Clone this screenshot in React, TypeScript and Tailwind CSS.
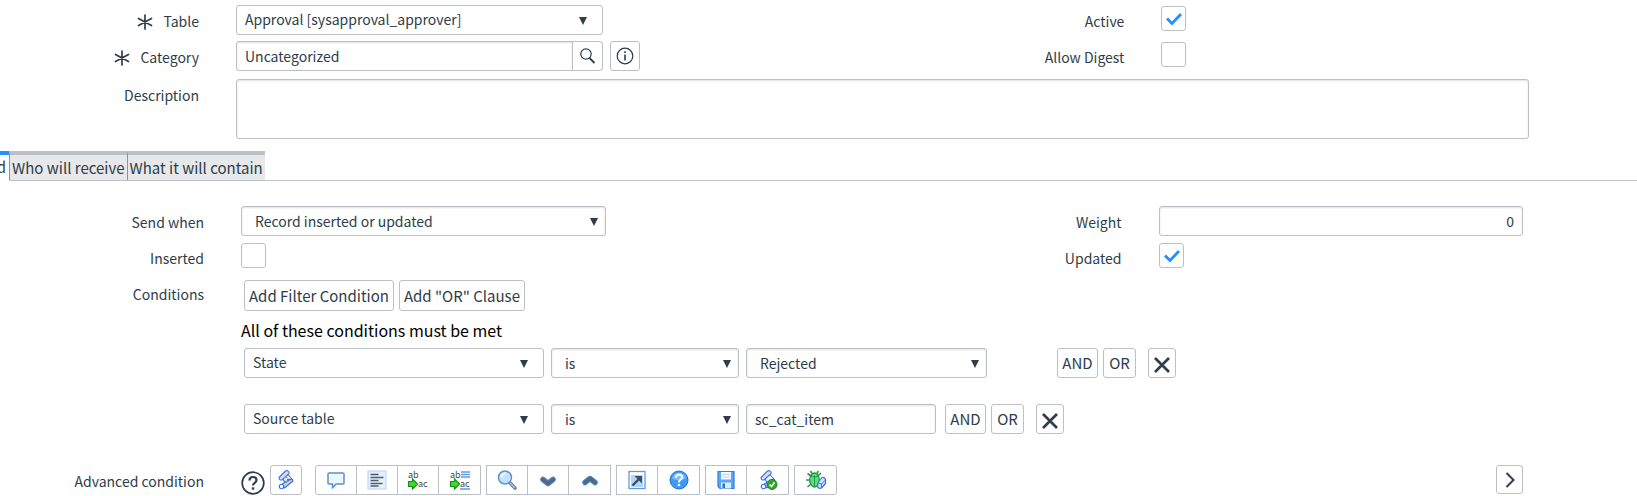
import type { ReactNode } from 'react'

const BOX = 'rounded-[3px] border border-[#bcbfc5] bg-white'
const INSET = 'shadow-[inset_0_1px_2px_rgba(0,0,0,0.12)]'

const FORM_GRID = 'grid grid-cols-[199px_11fr_447px_10fr] gap-x-[37px] pr-[108px]'
const TAB_GRID = 'grid grid-cols-[204px_364fr_479px_364fr] gap-x-[37px] pr-[114px]'

function Asterisk() {
  return (
    <svg width="16" height="16" viewBox="0 0 16 16" className="mt-0.5 mr-2.5" stroke="#2e3d49" strokeWidth="1.7" strokeLinecap="round">
      <path d="M8 1v14M1.500 4.500l13 7M14.500 4.500l-13 7" />
    </svg>
  )
}

function Label({ htmlFor, required, children }: { htmlFor?: string; required?: boolean; children: ReactNode }) {
  return (
    <label htmlFor={htmlFor} className="flex h-[31px] items-center justify-end">
      {required && <Asterisk />}
      {children}
    </label>
  )
}

interface SelectProps {
  id?: string
  label?: string
  value: string
  wide?: boolean
  className?: string
}

function Select({ id, label, value, wide, className = '' }: SelectProps) {
  return (
    <div className={`relative ${className}`}>
      <select
        id={id}
        aria-label={label}
        className={`block h-[30px] w-full appearance-none ${BOX} ${wide ? 'pb-0.5 pl-2' : `pl-[13px] ${INSET}`}`}
      >
        <option>{value}</option>
      </select>
      <svg
        width="8"
        height="8"
        viewBox="0 0 8 8"
        className={`pointer-events-none absolute top-3 ${wide ? 'right-4' : 'right-2'}`}
      >
        <path d="M0 0h8L4 8z" fill="#2e3d49" />
      </svg>
    </div>
  )
}

function Checkbox({ id, checked }: { id: string; checked?: boolean }) {
  return (
    <div className="relative mt-px size-[25px]">
      <input id={id} type="checkbox" defaultChecked={checked} className={`peer block size-[25px] appearance-none ${BOX}`} />
      <svg
        width="25"
        height="25"
        viewBox="0 0 25 25"
        className="pointer-events-none absolute inset-0 hidden peer-checked:block"
        fill="none"
        stroke="#278efc"
        strokeWidth="2.8"
      >
        <path d="M6 12.500l5 5L20 8" />
      </svg>
    </div>
  )
}

function Button({ children, label, className = 'h-[30px]' }: { children: ReactNode; label?: string; className?: string }) {
  return (
    <button type="button" aria-label={label} className={`flex items-center justify-center whitespace-nowrap ${BOX} ${className}`}>
      {children}
    </button>
  )
}

function RowButtons({ className = '' }: { className?: string }) {
  return (
    <div className={`flex ${className}`}>
      <Button className="h-[30px] w-[41px] text-[15px]">AND</Button>
      <Button className="ml-[5px] h-[30px] w-[33px] text-[15px]">OR</Button>
      <Button label="Remove condition" className="ml-3 h-[30px] w-[28px]">
        <svg width="16" height="16" viewBox="0 0 16 16" className="mt-1" stroke="#2e3d49" strokeWidth="2.7">
          <path d="M1 1l14 14M15 1L1 15" />
        </svg>
      </Button>
    </div>
  )
}

function Icon({ children }: { children: ReactNode }) {
  return (
    <svg width="20" height="20" viewBox="0 0 20 20" fill="none" className="overflow-visible">
      {children}
    </svg>
  )
}

function ScriptShape() {
  return (
    <g stroke="#3f6fe8" strokeWidth="1.1" strokeLinejoin="round">
      <path d="M6.500 8.500L11 3.500l5.500 6-5.500 5.500z" fill="#f3f8ff" />
      <path d="M3 7.500L9.500 1q2-1 3.500 1 .5 1.500-1 2.500L6 10q-3 .5-3-2.500z" fill="#cfe0fd" />
      <path d="M5.500 14.500l8.500-5q2.500-.5 3 1.500L8.500 18z" fill="#b9d2fc" />
      <circle cx="5.500" cy="16.500" r="2.200" fill="#fff" />
    </g>
  )
}

function ScriptIcon() {
  return (
    <Icon>
      <ScriptShape />
      <path d="M8.500 7.500h3" stroke="#f08a2c" strokeWidth="1.400" />
      <path d="M11 9.500h3.500" stroke="#e03c31" strokeWidth="1.500" />
      <path d="M7.500 11.500h4" stroke="#3cb54a" strokeWidth="1.500" />
    </Icon>
  )
}

function CommentIcon() {
  return (
    <Icon>
      <path d="M3 3h14q1 0 1 1v9q0 1-1 1h-7l-3.500 4v-4H3q-1 0-1-1V4q0-1 1-1z" fill="#eef6fe" stroke="#5a93cf" strokeWidth="1.500" strokeLinejoin="round" />
    </Icon>
  )
}

function FormatIcon() {
  return (
    <Icon>
      <rect x="1" y="1" width="18" height="18" fill="#e4effd" stroke="#b8d1f6" />
      <path d="M3.500 4.500h8M3.500 7.500h13M3.500 10.500h8M3.500 13.500h12M3.500 16h8" stroke="#555c66" strokeWidth="1.400" />
    </Icon>
  )
}

function ReplaceIcon({ all }: { all?: boolean }) {
  return (
    <Icon>
      {all && <path d="M11 2h9M11 4.500h9M11 7h9M10 19h10" stroke="#5b9be0" strokeWidth="1.500" />}
      <g fill="#4a4a4a" fontSize="9" fontFamily="'Noto Sans CJK SC', sans-serif">
        <text x="0" y="8">ab</text>
        <text x="10" y="17">ac</text>
      </g>
      <path d="M.5 11.500h4V9l5 5-5 5v-2.500h-4z" fill="#3ddc2a" stroke="#15901a" strokeWidth="1.200" />
    </Icon>
  )
}

function SearchIcon() {
  return (
    <Icon>
      <path d="M12.500 12.500l5.500 5.500" stroke="#6b7f99" strokeWidth="3.600" strokeLinecap="round" />
      <path d="M13 13l4.500 4.500" stroke="#a3c4ea" strokeWidth="1.400" strokeLinecap="round" />
      <circle cx="8" cy="7.500" r="6.500" fill="#c6e1fa" stroke="#5b95d6" strokeWidth="1.500" />
      <path d="M4.500 7q.5-3 3.500-3.500" stroke="#fff" strokeWidth="1.600" strokeLinecap="round" />
    </Icon>
  )
}

function ChevronIcon({ up }: { up?: boolean }) {
  const d = up ? 'M5 12.500l5-4 5 4' : 'M5 9.500l5 4 5-4'
  return (
    <Icon>
      <path d={d} stroke="#3f86cc" strokeWidth="5.500" strokeLinecap="round" strokeLinejoin="round" />
      <path d={d} stroke="#5a6675" strokeWidth="3.200" strokeLinecap="round" strokeLinejoin="round" />
    </Icon>
  )
}

function PopoutIcon() {
  return (
    <Icon>
      <rect x="2" y="1.500" width="16" height="17" fill="#fff" stroke="#5a9be0" strokeWidth="1.300" />
      <rect x="4" y="5" width="12" height="12" fill="#b5d3f3" />
      <path d="M5.500 15.500L12 9" stroke="#3a4f69" strokeWidth="2.400" />
      <path d="M7.500 6h7.500v7.500z" fill="#3a4f69" />
    </Icon>
  )
}

function HelpBadgeIcon() {
  return (
    <Icon>
      <circle cx="10" cy="10" r="9" fill="#3c9cf5" stroke="#1c6fd0" />
      <path d="M3 8.500a7.200 7.200 0 0 1 14 0q-7 3-14 0z" fill="#7cc0fb" />
      <path d="M7 7.500q0-3 3-3t3 2.700q0 1.800-1.600 2.600T10 12.300" stroke="#fff" strokeWidth="2" />
      <circle cx="10" cy="15" r="1.300" fill="#fff" />
    </Icon>
  )
}

function SaveIcon() {
  return (
    <Icon>
      <path d="M2 1.500h16v17H4l-2-2z" fill="#5aa7f5" stroke="#2f7fdc" strokeWidth="1.200" />
      <rect x="5" y="2" width="10" height="7.500" fill="#f4f9ff" />
      <path d="M6 4.500h8M6 7h8" stroke="#c3d5ea" />
      <rect x="5" y="12.500" width="10" height="6" fill="#dfeaf7" />
      <rect x="6.500" y="13.500" width="2.500" height="4.500" fill="#2f6fbf" />
    </Icon>
  )
}

function ScriptCheckIcon() {
  return (
    <Icon>
      <ScriptShape />
      <circle cx="14" cy="14.500" r="5" fill="#2fa52b" stroke="#1d8420" />
      <path d="M11.500 14.500l2 2 3-4" stroke="#fff" strokeWidth="1.600" />
    </Icon>
  )
}

function DebugIcon() {
  return (
    <Icon>
      <path d="M5 6L1.500 3.500M4 10H0M5 14l-3.500 3M12 6l3-3M6 3.500L4.500 1M11 3.500L12.500 1" stroke="#2c9c4c" strokeWidth="1.600" />
      <ellipse cx="8.500" cy="10" rx="4.800" ry="7" fill="#5fdc86" stroke="#1f9a45" strokeWidth="1.300" />
      <path d="M8.500 5.500v11M4.500 6q4 2 8 0" stroke="#1f9a45" />
      <path d="M12 12.500l4-5q2.500-.5 3.500 2v4L15.500 18q-3 1-4-1.500z" fill="#cfe0fd" stroke="#3f6fe8" strokeWidth="1.200" strokeLinejoin="round" />
      <path d="M12 13l3.500 1 4-4M15.500 14v3.500" stroke="#3f6fe8" />
    </Icon>
  )
}

interface Tool {
  label: string
  icon: ReactNode
}

const TOOL_GROUPS: Tool[][] = [
  [
    { label: 'Toggle comment', icon: <CommentIcon /> },
    { label: 'Format code', icon: <FormatIcon /> },
    { label: 'Replace', icon: <ReplaceIcon /> },
    { label: 'Replace all', icon: <ReplaceIcon all /> },
  ],
  [
    { label: 'Search', icon: <SearchIcon /> },
    { label: 'Find next', icon: <ChevronIcon /> },
    { label: 'Find previous', icon: <ChevronIcon up /> },
  ],
  [
    { label: 'Full screen', icon: <PopoutIcon /> },
    { label: 'Editor help', icon: <HelpBadgeIcon /> },
  ],
  [
    { label: 'Save', icon: <SaveIcon /> },
    { label: 'Check syntax', icon: <ScriptCheckIcon /> },
  ],
  [{ label: 'Script debugger', icon: <DebugIcon /> }],
]

function Toolbar() {
  return (
    <div className="flex gap-[5px]">
      {TOOL_GROUPS.map((group, g) => (
        <div
          key={g}
          className="flex h-[30px] divide-x divide-[#bcbfc5] border border-[#bcbfc5] first:rounded-l-[3px] last:rounded-r-[3px]"
        >
          {group.map(({ label, icon }) => (
            <button key={label} type="button" aria-label={label} className="flex w-[41px] items-center justify-center">
              {icon}
            </button>
          ))}
        </div>
      ))}
    </div>
  )
}

function Tabs() {
  return (
    <div role="tablist" className="mt-3 flex h-[30px] text-[15px] leading-[24px] whitespace-nowrap">
      <button type="button" role="tab" aria-selected="true" className="flex w-[9px] justify-end overflow-hidden border-t-4 border-[#278efc] pr-[3px]">
        When to send
      </button>
      <div className="flex flex-1 border-b border-[#bcbfc5]">
        {['Who will receive', 'What it will contain'].map((tab) => (
          <button
            key={tab}
            type="button"
            role="tab"
            aria-selected="false"
            className="border-t-4 border-l border-t-[#bcbfc5] border-l-[#8f9399] bg-[#e6e8ea] px-0.5"
          >
            {tab}
          </button>
        ))}
      </div>
    </div>
  )
}

export default function App() {
  return (
    <div className="overflow-hidden bg-white font-['Noto_Sans_CJK_SC','Noto_Sans',sans-serif] text-[14px] leading-5 text-[#2e3d49]">
      <div className={`${FORM_GRID} pt-[5px]`}>
        <Label htmlFor="table" required>Table</Label>
        <Select id="table" value="Approval [sysapproval_approver]" wide className="mr-[37px]" />
        <Label htmlFor="active">Active</Label>
        <Checkbox id="active" checked />
      </div>
      <div className={`${FORM_GRID} mt-[5px]`}>
        <Label htmlFor="category" required>Category</Label>
        <div className="flex">
          <input id="category" defaultValue="Uncategorized" className={`h-[30px] min-w-0 flex-1 rounded-r-none px-2 ${BOX} ${INSET}`} />
          <Button label="Look up category" className="-ml-px h-[30px] w-[31px] rounded-l-none">
            <svg width="16" height="16" viewBox="0 0 16 16" fill="none" stroke="#2e3d49" strokeWidth="1.200">
              <circle cx="6" cy="6" r="5.200" />
              <path d="M9.500 10l5 5" strokeWidth="1.800" />
            </svg>
          </Button>
          <Button label="Preview record" className="ml-[7px] h-[30px] w-[30px]">
            <svg width="18" height="18" viewBox="0 0 18 18" fill="none" stroke="#2e3d49" strokeWidth="1.200">
              <circle cx="9" cy="9" r="7.800" />
              <path d="M9 7.500v6M9 4.300v1.700" strokeWidth="1.600" />
            </svg>
          </Button>
        </div>
        <Label htmlFor="digest">Allow Digest</Label>
        <Checkbox id="digest" />
      </div>
      <div className="mt-[7px] grid grid-cols-[199px_1fr] gap-x-[37px] pr-[108px]">
        <Label htmlFor="description">Description</Label>
        <textarea id="description" className={`block h-[60px] w-full resize-none ${BOX} ${INSET}`} />
      </div>

      <Tabs />

      <div className={`${TAB_GRID} pt-[25px]`}>
        <Label htmlFor="send-when">Send when</Label>
        <Select id="send-when" value="Record inserted or updated" />
        <Label htmlFor="weight">Weight</Label>
        <input id="weight" defaultValue="0" className={`h-[30px] min-w-0 px-2 text-right ${BOX} ${INSET}`} />
      </div>
      <div className={`${TAB_GRID} mt-[5px]`}>
        <Label htmlFor="inserted">Inserted</Label>
        <Checkbox id="inserted" />
        <Label htmlFor="updated">Updated</Label>
        <Checkbox id="updated" checked />
      </div>

      <div className="mt-[7px] grid grid-cols-[204px_1fr] gap-x-[37px]">
        <span className="text-right leading-7">Conditions</span>
        <div>
          <div className="ml-[3px] flex gap-[5px] text-[15px]">
            <Button className="h-[31px] px-1">Add Filter Condition</Button>
            <Button className="h-[31px] px-1">Add "OR" Clause</Button>
          </div>
          <p className="mt-[7px] text-[16px] leading-6 text-black">All of these conditions must be met</p>
          <div className="mt-[6px] ml-[3px] flex">
            <Select label="Field" value="State" wide className="w-[300px]" />
            <Select label="Operator" value="is" className="ml-[7px] w-[188px]" />
            <Select label="Value" value="Rejected" className="ml-[7px] w-[241px]" />
            <RowButtons className="ml-[70px]" />
          </div>
          <div className="mt-[26px] ml-[3px] flex">
            <Select label="Field" value="Source table" wide className="w-[300px]" />
            <Select label="Operator" value="is" className="ml-[7px] w-[188px]" />
            <input aria-label="Value" defaultValue="sc_cat_item" className={`ml-[7px] h-[30px] w-[190px] px-2 ${BOX} ${INSET}`} />
            <RowButtons className="ml-[9px]" />
          </div>
        </div>
      </div>

      <div className="mt-[31px] grid grid-cols-[204px_1fr] gap-x-[37px] pr-[114px]">
        <span className="text-right leading-8">Advanced condition</span>
        <div className="flex">
          <button type="button" aria-label="Script help" className="pt-1">
            <svg width="24" height="24" viewBox="0 0 24 24" fill="none" stroke="#2e3d49">
              <circle cx="12" cy="12" r="10.800" strokeWidth="1.700" />
              <path d="M8.500 9.500q0-3.500 3.500-3.500t3.500 3q0 1.700-1.700 2.800T12 14.500" strokeWidth="2.200" />
              <path d="M12 16.300v2.400" strokeWidth="2.400" />
            </svg>
          </button>
          <Button label="Toggle syntax editor" className="mr-[13px] ml-[5px] h-[30px] w-8">
            <ScriptIcon />
          </Button>
          <Toolbar />
          <Button label="Expand" className="ml-auto h-[29px] w-[27px]">
            <svg width="10" height="16" viewBox="0 0 10 16" fill="none" stroke="#2e3d49" strokeWidth="2">
              <path d="M1.500 1l7 7-7 7" />
            </svg>
          </Button>
        </div>
      </div>
    </div>
  )
}
